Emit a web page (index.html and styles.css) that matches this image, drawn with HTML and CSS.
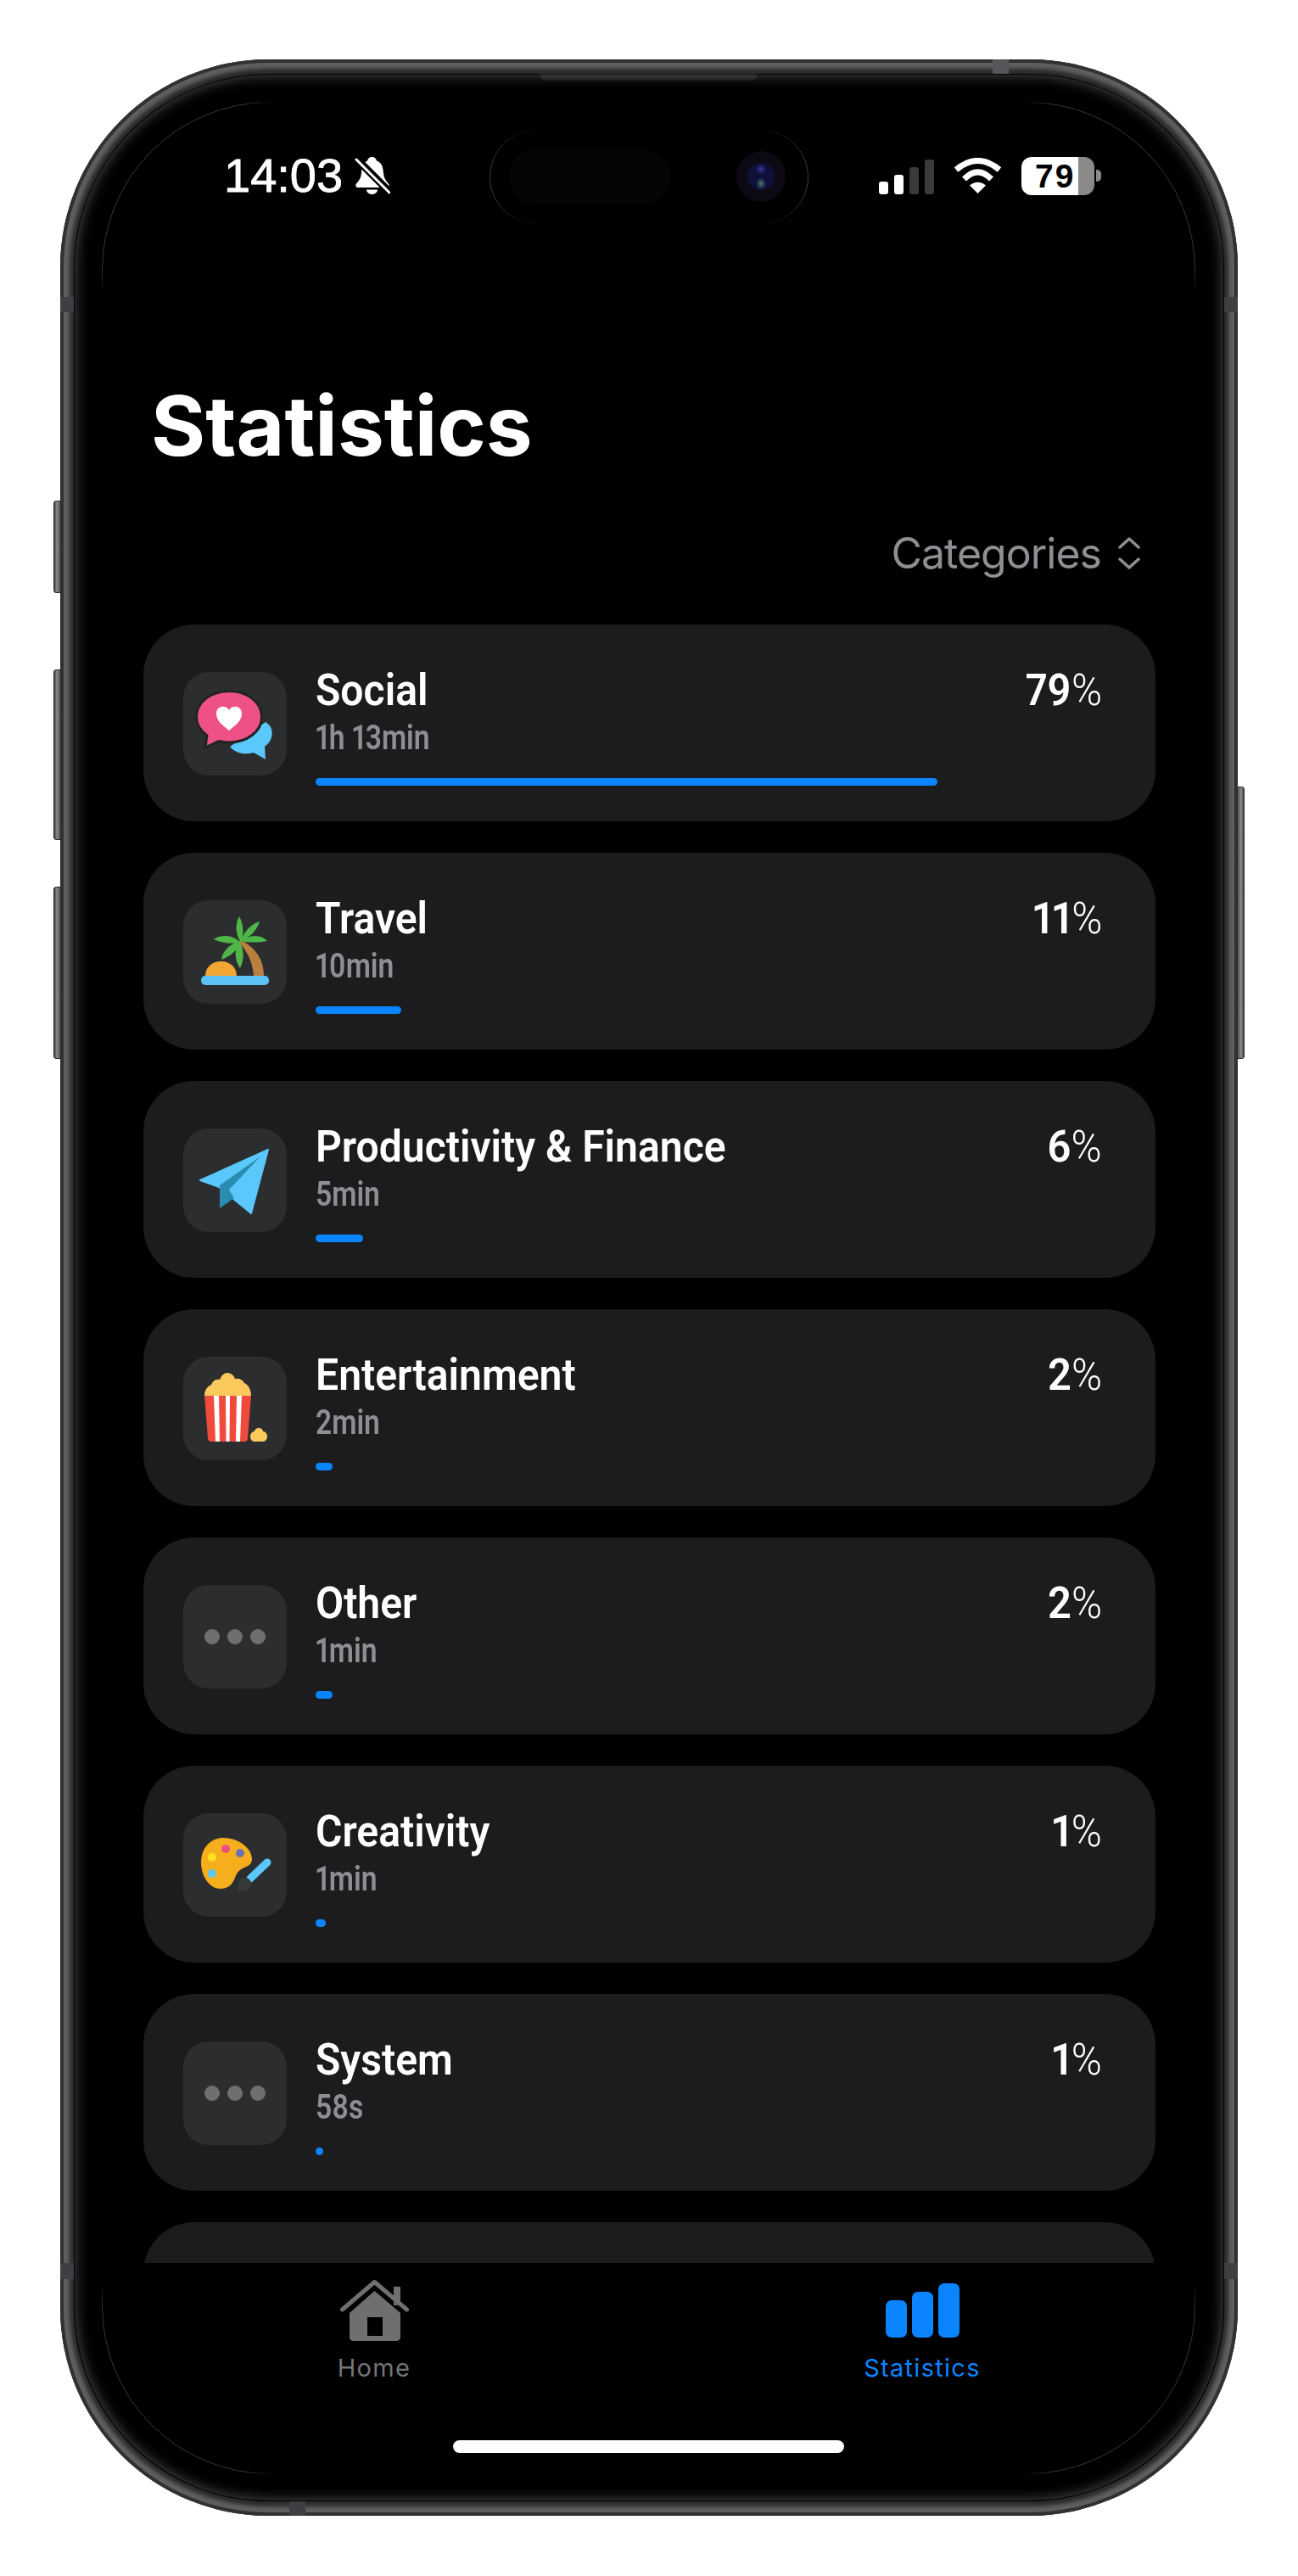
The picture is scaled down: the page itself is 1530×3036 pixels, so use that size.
FILE: index.html
```html
<!DOCTYPE html>
<html lang="en">
<head>
    <meta charset="UTF-8">
    <meta name="viewport" content="width=device-width, initial-scale=1.0">
    <title>Statistics</title>
    <link rel="stylesheet" href="styles.css">
</head>
<body>
    <div class="phone">
        <span class="side-btn btn-action"></span>
        <span class="side-btn btn-up"></span>
        <span class="side-btn btn-down"></span>
        <span class="side-btn btn-power"></span>
        <span class="band band-top"></span>
        <span class="band band-bottom"></span>
        <span class="band band-left-a"></span>
        <span class="band band-left-b"></span>
        <span class="band band-right-a"></span>
        <span class="band band-right-b"></span>

        <div class="screen">
            <div class="speaker"></div>
            <div class="island">
                <div class="island-pill"></div>
                <div class="camera"></div>
            </div>

            <div class="status-bar">
                <div class="status-left">
                    <span class="time">14:03</span>
                    <svg class="bell" width="42" height="44" viewBox="0 0 42 44">
                        <path fill="#fff" d="M20.5 0c3 0 5 2 5.500 4.500C32 6.500 33.500 12 34 19c.5 6 3 9 6 12.500 1.500 2 .5 4.500-2 4.500H4c-2.500 0-3.500-2.500-2-4.500C5 28 7.500 25 8 19c.5-7 2-12.500 7-14.500C15.500 2 17.500 0 20.500 0z"/>
                        <path fill="#fff" d="M14 38.500h13c0 3-3 5.500-6.500 5.500S14 41.500 14 38.500z"/>
                        <path stroke="#000" stroke-width="9" d="M1 1l41 41"/>
                        <path stroke="#fff" stroke-width="3" stroke-linecap="round" d="M2 3l39 39"/>
                    </svg>
                </div>
                <div class="status-right">
                    <div class="signal">
                        <span class="sig sig-1"></span>
                        <span class="sig sig-2"></span>
                        <span class="sig sig-3 off"></span>
                        <span class="sig sig-4 off"></span>
                    </div>
                    <svg width="57" height="42" viewBox="0 0 57 42">
                        <path fill="none" stroke="#fff" stroke-width="7" d="M3 14Q28.500-7 54 14"/>
                        <path fill="none" stroke="#fff" stroke-width="7" d="M12.500 25Q28.500 9 44.500 25"/>
                        <path fill="#fff" d="M28.500 42L19 32.500Q28.500 25 38 32.500Z"/>
                    </svg>
                    <div class="battery">79</div>
                </div>
            </div>

            <h1 class="page-title">Statistics</h1>

            <div class="filter">
                <span>Categories</span>
                <svg width="26" height="38" viewBox="0 0 26 38">
                    <path fill="none" stroke="#8e8e93" stroke-width="3.500" stroke-linecap="round" stroke-linejoin="round" d="M2 12L13 2l11 10M2 26l11 10 11-10"/>
                </svg>
            </div>

            <div class="list">
                <div class="card">
                    <div class="icon-box">
                        <svg width="122" height="122" viewBox="0 0 122 122">
                            <path fill="#5ac8fa" d="M97 59c7 4 9 11 7 18-1 4-4 8-8 11l1 15-14-8c-11 3-21 1-28-7z"/>
                            <path fill="#ee5186" stroke="#222325" stroke-width="3" d="M54 22.500c21 0 38.500 13 38.500 30.500S75 83 54 83c-4 0-8-.5-12-1.500L26 89l2-14C20 69 15.500 61 15.500 53c0-17.500 17.500-30.500 38.500-30.500z"/>
                            <path fill="#fff" d="M54 69c-7-6-15-11-15-20 0-9 11-11 15-4 4-7 15-5 15 4 0 9-8 14-15 20z"/>
                        </svg>
                    </div>
                    <div class="card-body">
                        <div class="card-title"><span>Social</span></div>
                        <div class="card-time"><span>1h 13min</span></div>
                        <div class="bar" style="width:733px"></div>
                    </div>
                    <div class="card-pct"><span>79<i>%</i></span></div>
                </div>

                <div class="card">
                    <div class="icon-box">
                        <svg width="122" height="122" viewBox="0 0 122 122">
                            <path fill="#f3a533" d="M26 89c0-10 8-17 18.500-17S63 79 63 89z"/>
                            <path fill="#b97f3f" d="M68 47c16 8 27 22 27 42H83c-1-14-6-27-17-39z"/>
                            <g fill="#4fb748">
                                <path d="M68 50C60 38 62 26 66 19c5 9 6 21 2 31z"/>
                                <path d="M68 48c4-12 12-20 22-23-3 11-12 19-22 23z"/>
                                <path d="M68 48c10-8 24-8 31 0-11 2-23 2-31 0z"/>
                                <path d="M68 50C58 40 44 40 36 46c8 4 20 6 32 4z"/>
                                <path d="M68 48c-12 2-22 12-23 22 10-4 19-10 23-22z"/>
                                <path d="M66 48c-6 10-6 22 1 32 5-10 5-22-1-32z"/>
                            </g>
                            <rect x="21" y="89" width="80" height="11" rx="5" fill="#5ac2f4"/>
                        </svg>
                    </div>
                    <div class="card-body">
                        <div class="card-title"><span>Travel</span></div>
                        <div class="card-time"><span>10min</span></div>
                        <div class="bar" style="width:101px"></div>
                    </div>
                    <div class="card-pct"><span>11<i>%</i></span></div>
                </div>

                <div class="card">
                    <div class="icon-box">
                        <svg width="122" height="122" viewBox="0 0 122 122">
                            <path fill="#5ac8fa" stroke="#5ac8fa" stroke-width="2" stroke-linejoin="round" d="M100 25L20 61l22 8 38 31z"/>
                            <path fill="#2a8cb0" d="M91 33L43 67v27l17-12-6-10z"/>
                        </svg>
                    </div>
                    <div class="card-body">
                        <div class="card-title"><span>Productivity &amp; Finance</span></div>
                        <div class="card-time"><span>5min</span></div>
                        <div class="bar" style="width:56px"></div>
                    </div>
                    <div class="card-pct"><span>6<i>%</i></span></div>
                </div>

                <div class="card">
                    <div class="icon-box">
                        <svg width="122" height="122" viewBox="0 0 122 122">
                            <path fill="#fbc85c" d="M25 46c0-6 3-11 8-13 2-5 6-7 10-6 2-5 5-8 9-8s8 3 9 7c5-1 9 1 11 5 5 2 8 8 8 15z"/>
                            <path fill="#ef4a3c" d="M25 46h55l-4 50c0 3-2 4-4 4H33c-2 0-4-1-4-4z"/>
                            <path fill="#fff" d="M36 46h6l1 54h-5zM50 46h5l-.500 54h-4zM63 46h6l-2 54h-5z"/>
                            <path fill="#fbc85c" d="M89 84c3 0 5 2 5 4 3 0 5 3 5 6 0 3-2 6-5 6h-10c-3 0-5-3-5-6 0-3 2-6 5-6 0-2 2-4 5-4z"/>
                        </svg>
                    </div>
                    <div class="card-body">
                        <div class="card-title"><span>Entertainment</span></div>
                        <div class="card-time"><span>2min</span></div>
                        <div class="bar" style="width:20px"></div>
                    </div>
                    <div class="card-pct"><span>2<i>%</i></span></div>
                </div>

                <div class="card">
                    <div class="icon-box dots">
                        <span></span><span></span><span></span>
                    </div>
                    <div class="card-body">
                        <div class="card-title"><span>Other</span></div>
                        <div class="card-time"><span>1min</span></div>
                        <div class="bar" style="width:20px"></div>
                    </div>
                    <div class="card-pct"><span>2<i>%</i></span></div>
                </div>

                <div class="card">
                    <div class="icon-box">
                        <svg width="122" height="122" viewBox="0 0 122 122">
                            <path fill="#f6ae1c" d="M47 29c18 0 34 12 34 25 0 6-4 8-9 10-5 2-9 6-11 12-3 8-8 13-17 13-14 0-23-16-23-31 0-17 11-29 26-29z"/>
                            <circle cx="34" cy="52" r="5" fill="#ffe21f"/>
                            <circle cx="50" cy="42" r="5" fill="#ee4f82"/>
                            <circle cx="67" cy="47" r="5" fill="#6a6fb8"/>
                            <circle cx="34" cy="71" r="5" fill="#5ac8fa"/>
                            <path stroke="#5ac8fa" stroke-width="9" stroke-linecap="round" d="M99 58L79 77"/>
                            <path fill="#38393b" d="M72 76c5 0 8 3 8 7 0 5-5 8-9 8h-7c1-1 1-3 1-6 0-5 3-9 7-9z"/>
                        </svg>
                    </div>
                    <div class="card-body">
                        <div class="card-title"><span>Creativity</span></div>
                        <div class="card-time"><span>1min</span></div>
                        <div class="bar" style="width:12px"></div>
                    </div>
                    <div class="card-pct"><span>1<i>%</i></span></div>
                </div>

                <div class="card">
                    <div class="icon-box dots">
                        <span></span><span></span><span></span>
                    </div>
                    <div class="card-body">
                        <div class="card-title"><span>System</span></div>
                        <div class="card-time"><span>58s</span></div>
                        <div class="bar" style="width:9px"></div>
                    </div>
                    <div class="card-pct"><span>1<i>%</i></span></div>
                </div>

                <div class="card"></div>
            </div>

            <div class="tabbar">
                <div class="tabs">
                    <div class="tab">
                        <svg width="81" height="72" viewBox="0 0 81 72">
                            <path fill="#6f6f6f" d="M63 8h8v22h-8z"/>
                            <path fill="none" stroke="#6f6f6f" stroke-width="5" stroke-linecap="round" stroke-linejoin="round" d="M2.500 35L40.500 2.500 78.500 35"/>
                            <path fill="#6f6f6f" fill-rule="evenodd" d="M40.500 13L71 39v28c0 3-2 5-5 5H16c-3 0-5-2-5-5V39zM32 44v22h18V44z"/>
                        </svg>
                        <span class="tab-label">Home</span>
                    </div>
                    <div class="tab active">
                        <svg width="87" height="72" viewBox="0 0 87 72">
                            <rect x="0" y="24" width="25" height="44" rx="7" fill="#0a84ff"/>
                            <rect x="31" y="14" width="25" height="54" rx="7" fill="#0a84ff"/>
                            <rect x="62" y="4" width="25" height="64" rx="7" fill="#0a84ff"/>
                        </svg>
                        <span class="tab-label">Statistics</span>
                    </div>
                </div>
                <div class="home-indicator"></div>
            </div>
        </div>
    </div>
</body>
</html>
```

FILE: styles.css
```css
html, body {
    margin: 0;
    background-color: #fff;
}
body {
    width: 1530px;
    height: 3036px;
    overflow: hidden;
    font-family: "Inter", sans-serif;
}
.phone {
    position: relative;
    box-sizing: border-box;
    width: 1388px;
    height: 2895px;
    margin: 70px 0 0 71px;
    padding: 17px 16px;
    border-radius: 245px;
    background-color: #2a2b2d;
    box-shadow: inset 0 0 0 4px #303133, inset 0 0 4px 11px #5e5f61;
}
.side-btn {
    position: absolute;
    width: 9px;
    background: linear-gradient(90deg, #3a3a3a, #8b8b8b 40%, #555);
    border: 1px solid #2b2b2b;
    box-sizing: border-box;
}
.btn-action { left: -8px; top: 520px; height: 109px; border-radius: 3px 0 0 3px; }
.btn-up { left: -8px; top: 719px; height: 201px; border-radius: 3px 0 0 3px; }
.btn-down { left: -8px; top: 975px; height: 203px; border-radius: 3px 0 0 3px; }
.btn-power { right: -8px; top: 857px; height: 321px; border-radius: 0 3px 3px 0; background: linear-gradient(270deg, #3a3a3a, #8b8b8b 40%, #555); }

.band {
    position: absolute;
    background-color: #3e3f42;
}
.band-top { left: 1099px; top: 0; width: 19px; height: 17px; background-color: #55565a; }
.band-bottom { left: 270px; bottom: 0; width: 19px; height: 17px; }
.band-left-a { left: 0; top: 280px; width: 16px; height: 18px; }
.band-left-b { left: 0; top: 2597px; width: 16px; height: 19px; }
.band-right-a { right: 0; top: 280px; width: 16px; height: 18px; }
.band-right-b { right: 0; top: 2597px; width: 16px; height: 19px; }

.screen {
    position: relative;
    display: flex;
    flex-direction: column;
    height: 100%;
    overflow: hidden;
    border-radius: 229px;
    background-color: #000;
    color: #fff;
}
/* glow of the glass edge, over the content */
.screen::after {
    content: "";
    position: absolute;
    inset: 1px;
    border-radius: 228px;
    box-shadow: inset 0 0 16px rgba(255, 255, 255, 0.32);
    pointer-events: none;
}
/* hairline, only the corners show */
.screen::before {
    content: "";
    position: absolute;
    left: 33px;
    right: 34px;
    top: 33px;
    bottom: 32px;
    border: 1px solid #3c3c3c;
    border-radius: 198px;
    -webkit-mask-image: linear-gradient(90deg, #000 170px, transparent 200px, transparent calc(100% - 200px), #000 calc(100% - 170px)), linear-gradient(180deg, #000 190px, transparent 228px, transparent calc(100% - 228px), #000 calc(100% - 190px));
    mask-image: linear-gradient(90deg, #000 170px, transparent 200px, transparent calc(100% - 200px), #000 calc(100% - 170px)), linear-gradient(180deg, #000 190px, transparent 228px, transparent calc(100% - 228px), #000 calc(100% - 190px));
    -webkit-mask-composite: source-in;
    mask-composite: intersect;
    z-index: 2;
    pointer-events: none;
}
.speaker {
    position: absolute;
    left: 550px;
    top: 0;
    width: 255px;
    height: 8px;
    background-color: #141415;
    border-radius: 0 0 6px 6px;
}
.island {
    position: absolute;
    left: 490px;
    top: 67px;
    width: 376px;
    height: 109px;
    box-sizing: border-box;
    border-radius: 55px;
    border-left: 1px solid #3a3a3a;
    border-right: 1px solid #3a3a3a;
}
.island-pill {
    position: absolute;
    left: 22px;
    top: 22px;
    width: 190px;
    height: 65px;
    border-radius: 32px;
    background-color: #050505;
}
.camera {
    position: absolute;
    left: 290px;
    top: 24px;
    width: 58px;
    height: 60px;
    border-radius: 50%;
    background:
        radial-gradient(ellipse 6px 7px at 50% 64%, #4a7a6a, transparent),
        radial-gradient(ellipse 6px 6px at 50% 36%, #3a3aa0, transparent),
        radial-gradient(circle at 50% 50%, #10103c 0, #10103c 15px, #0c0a14 17px, #0c0812 100%);
}

.status-bar {
    display: flex;
    justify-content: space-between;
    align-items: center;
    height: 46px;
    margin-top: 97px;
    padding: 0 145px 0 177px;
}
.status-left {
    display: flex;
    align-items: center;
    gap: 14px;
}
.time {
    font-family: "Liberation Sans", Arial, sans-serif;
    font-size: 56px;
    line-height: 46px;
    -webkit-text-stroke: 0.8px #fff;
}
.status-right {
    display: flex;
    align-items: center;
    gap: 23px;
}
.signal {
    display: flex;
    align-items: flex-end;
    gap: 7px;
    height: 41px;
    margin-top: 2px;
}
.sig {
    width: 11px;
    border-radius: 3px;
    background-color: #fff;
}
.sig.off { background-color: #3a3a3a; }
.sig-1 { height: 15px; }
.sig-2 { height: 23px; }
.sig-3 { height: 32px; }
.sig-4 { height: 41px; }
.battery {
    position: relative;
    box-sizing: border-box;
    width: 86px;
    height: 45px;
    margin-right: 8px;
    padding-left: 16px;
    border-radius: 12px;
    background: linear-gradient(90deg, #fff 78%, #8a8a8a 78%);
    color: #000;
    font-family: "Liberation Sans", Arial, sans-serif;
    font-weight: bold;
    font-size: 39px;
    letter-spacing: 2px;
    line-height: 45px;
}
.battery::after {
    content: "";
    position: absolute;
    right: -8px;
    top: 15px;
    width: 6px;
    height: 14px;
    border-radius: 0 5px 5px 0;
    background-color: #8a8a8a;
}

.page-title {
    margin: 222px 0 0 91px;
    font-size: 98px;
    line-height: 100px;
    font-weight: 700;
}
.filter {
    display: flex;
    justify-content: flex-end;
    align-items: center;
    gap: 20px;
    height: 50px;
    margin-top: 75px;
    padding-right: 99px;
    color: #8e8e93;
    font-size: 50px;
    letter-spacing: -1px;
    line-height: 50px;
}

.list {
    display: flex;
    flex-direction: column;
    gap: 37px;
    flex: 1;
    min-height: 0;
    overflow: hidden;
    margin: 59px 81px 0 82px;
}
.card {
    display: flex;
    flex: none;
    box-sizing: border-box;
    height: 232px;
    padding: 51px 63px 0 47px;
    border-radius: 60px;
    background-color: #1c1c1e;
}
.icon-box {
    flex: none;
    width: 122px;
    height: 122px;
    margin-top: 5px;
    border-radius: 30px;
    background-color: #2c2d2f;
}
.icon-box svg { display: block; }
.dots {
    display: flex;
    justify-content: center;
    align-items: center;
    gap: 9px;
}
.dots span {
    width: 18px;
    height: 18px;
    border-radius: 50%;
    background-color: #6f6f6f;
}
.card-body {
    flex: 1;
    margin-left: 34px;
}
/* no Barlow here, so the Roboto text gets squeezed to its width */
.card-title span, .card-time span, .card-pct span {
    display: inline-block;
    transform-origin: left center;
    font-family: "Roboto", sans-serif;
    font-weight: 600;
    font-variant-numeric: proportional-nums;
    white-space: nowrap;
}
.card-title {
    font-size: 52px;
    line-height: 52px;
    height: 52px;
}
.card-title span { transform: scaleX(0.925); }
.card-time {
    margin-top: 10px;
    color: #8e8e93;
    font-size: 40px;
    line-height: 40px;
    height: 40px;
}
.card-time span { transform: scaleX(0.84); }
.bar {
    height: 9px;
    margin-top: 28px;
    border-radius: 5px;
    background-color: #0a84ff;
}
.card-pct {
    font-size: 52px;
    line-height: 52px;
}
.card-pct span {
    transform: scaleX(0.94);
    transform-origin: right center;
}
.card-pct i {
    font-style: normal;
    font-weight: 300;
}

.tabbar {
    flex: none;
    height: 281px;
    box-sizing: border-box;
    padding-top: 20px;
    background-color: #000;
}
.tabs {
    display: grid;
    grid-template-columns: 1fr 1fr;
    padding: 0 33px 0 31px;
}
.tab {
    display: flex;
    flex-direction: column;
    align-items: center;
    color: #757575;
}
.tab.active { color: #0a84ff; }
.tab svg { display: block; }
.tab-label {
    margin-top: 14px;
    font-size: 29px;
    letter-spacing: 1.3px;
    line-height: 36px;
}
.home-indicator {
    width: 461px;
    height: 15px;
    margin: 67px 0 0 447px;
    border-radius: 8px;
    background-color: #fff;
}
```
